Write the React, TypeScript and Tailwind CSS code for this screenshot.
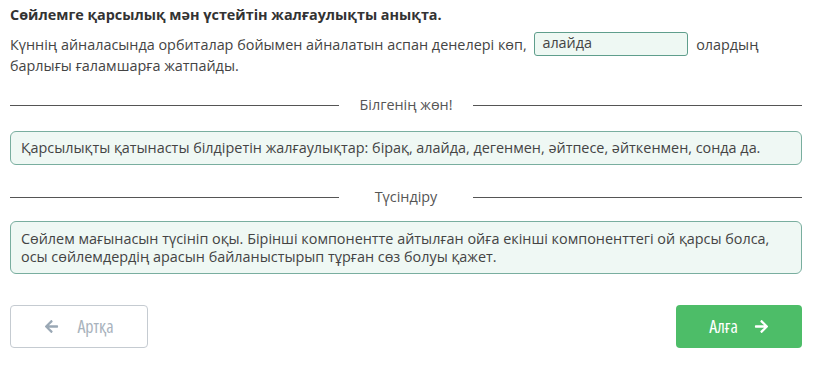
import React from 'react';
import { FaArrowLeft, FaArrowRight } from 'react-icons/fa';

const Divider: React.FC<{ label: string }> = ({ label }) => (
  <div className="flex items-center">
    <div className="h-px flex-1 bg-[#555]" />
    <div className="w-[134px] text-center text-[14.4px] leading-[20px] text-[#555]">{label}</div>
    <div className="h-px flex-1 bg-[#555]" />
  </div>
);

const App: React.FC = () => {
  return (
    <div className="h-[372px] w-[815px] bg-white px-[10px] pr-[13px] text-[#444] [font-family:'Open_Sans',sans-serif]">
      <h1 className="pt-[5px] text-[14.4px] font-bold leading-[20px] text-[#333]">
        Сөйлемге қарсылық мән үстейтін жалғаулықты анықта.
      </h1>
      <p className="mt-[7px] text-[14.4px] leading-[20px]">
        Күннің айналасында орбиталар бойымен айналатын аспан денелері көп,{' '}
        <span className="mx-[4px] inline-block h-[24px] w-[154px] rounded-[3px] border border-[#5f9e8c] bg-[#eef8f3] px-[7px] align-[2px] leading-[20px] text-[#444]">
          алайда
        </span>{' '}
        олардың барлығы ғаламшарға жатпайды.
      </p>

      <div className="mt-[19px]">
        <Divider label="Білгенің жөн!" />
      </div>

      <div className="mt-[16px] rounded-[6px] border border-[#79ae9f] bg-[#eff8f4] px-[10px] py-[7px] text-[14.4px] leading-[18px]">
        Қарсылықты қатынасты білдіретін жалғаулықтар: бірақ, алайда, дегенмен, әйтпесе, әйткенмен, сонда да.
      </div>

      <div className="mt-[22px]">
        <Divider label="Түсіндіру" />
      </div>

      <div className="mt-[14px] rounded-[6px] border border-[#79ae9f] bg-[#eff8f4] px-[10px] pb-[7px] pt-[8px] text-[14.4px] leading-[18px]">
        Сөйлем мағынасын түсініп оқы. Бірінші компонентте айтылған ойға екінші компоненттегі ой қарсы болса, осы сөйлемдердің арасын байланыстырып тұрған сөз болуы қажет.
      </div>

      <div className="mt-[31px] flex items-center justify-between">
        <button className="flex h-[43px] w-[138px] items-center justify-center gap-[18px] rounded-[4px] border border-[#c5cbd1] bg-white text-[18px] text-[#a9b3bd] [font-stretch:condensed]">
          <FaArrowLeft className="h-[15px] w-[15px] text-[#9aa8b5]" />
          <span>Артқа</span>
        </button>
        <button className="flex h-[43px] w-[126px] items-center justify-center gap-[16px] rounded-[4px] bg-[#4dbd68] text-[18px] text-white [font-stretch:condensed]">
          <span>Алға</span>
          <FaArrowRight className="h-[15px] w-[15px]" />
        </button>
      </div>
    </div>
  );
};

export default App;
